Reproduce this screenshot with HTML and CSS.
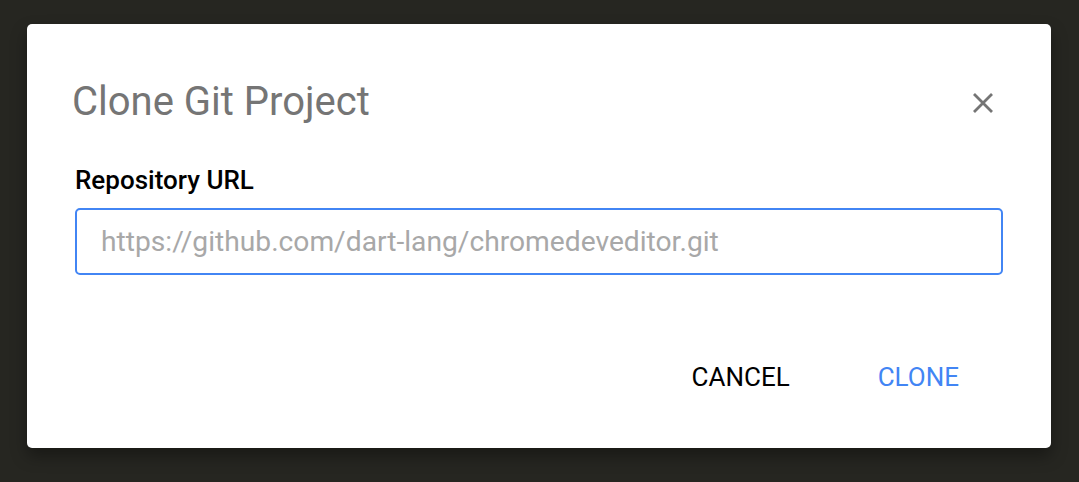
FILE: index.html
```html
<!DOCTYPE html>
<html>
<head>
<meta charset="utf-8">
<link rel="stylesheet" href="styles.css">
</head>
<body>
<div class="dialog">
  <div class="header">
    <h1 class="title">Clone Git Project</h1>
    <button class="close" aria-label="Close">
      <svg width="20" height="20" viewBox="0 0 20 20"><path d="M1 1 L19 19 M19 1 L1 19" stroke="#757575" stroke-width="2.8" fill="none"/></svg>
    </button>
  </div>
  <label class="label">Repository URL</label>
  <input class="url" type="text" placeholder="https://github.com/dart-lang/chromedeveditor.git">
  <div class="actions">
    <button class="btn cancel">CANCEL</button>
    <button class="btn clone">CLONE</button>
  </div>
</div>
</body>
</html>
```
FILE: styles.css
```css
html, body {
  margin: 0;
  padding: 0;
  height: 100%;
}
body {
  background: #262621;
  font-family: Roboto, "Liberation Sans", sans-serif;
  padding: 24px 28px 0 27px;
  box-sizing: border-box;
}
.dialog {
  background: #fff;
  border-radius: 5px;
  height: 424px;
  box-sizing: border-box;
  padding: 54px 48px 0 48px;
  box-shadow: 0 8px 16px rgba(0,0,0,0.35);
  display: flex;
  flex-direction: column;
}
.header {
  display: flex;
  align-items: flex-start;
  justify-content: space-between;
}
.title {
  margin: 0 0 0 -3px;
  font-weight: 400;
  font-size: 40px;
  line-height: normal;
  color: #757575;
}
.close {
  border: 0;
  background: none;
  padding: 0;
  width: 20px;
  height: 20px;
  margin: 15px 10px 0 0;
  display: flex;
}
.label {
  margin-top: 40px;
  font-weight: 500;
  font-size: 26px;
  line-height: normal;
  color: #000;
}
.url {
  margin-top: 13px;
  height: 67px;
  box-sizing: border-box;
  border: 2px solid #4285f4;
  border-radius: 5px;
  outline: none;
  padding: 0 24px;
  font-family: Roboto, "Liberation Sans", sans-serif;
  font-size: 28.2px;
}
.url::placeholder {
  color: #a8a8a8;
}
.actions {
  display: flex;
  justify-content: flex-end;
  gap: 88px;
  margin-top: 87px;
  padding-right: 44px;
}
.btn {
  border: 0;
  background: none;
  padding: 0;
  font-family: Roboto, "Liberation Sans", sans-serif;
  font-size: 26px;
  line-height: normal;
}
.cancel { color: #000; }
.clone { color: #4285f4; }
```
